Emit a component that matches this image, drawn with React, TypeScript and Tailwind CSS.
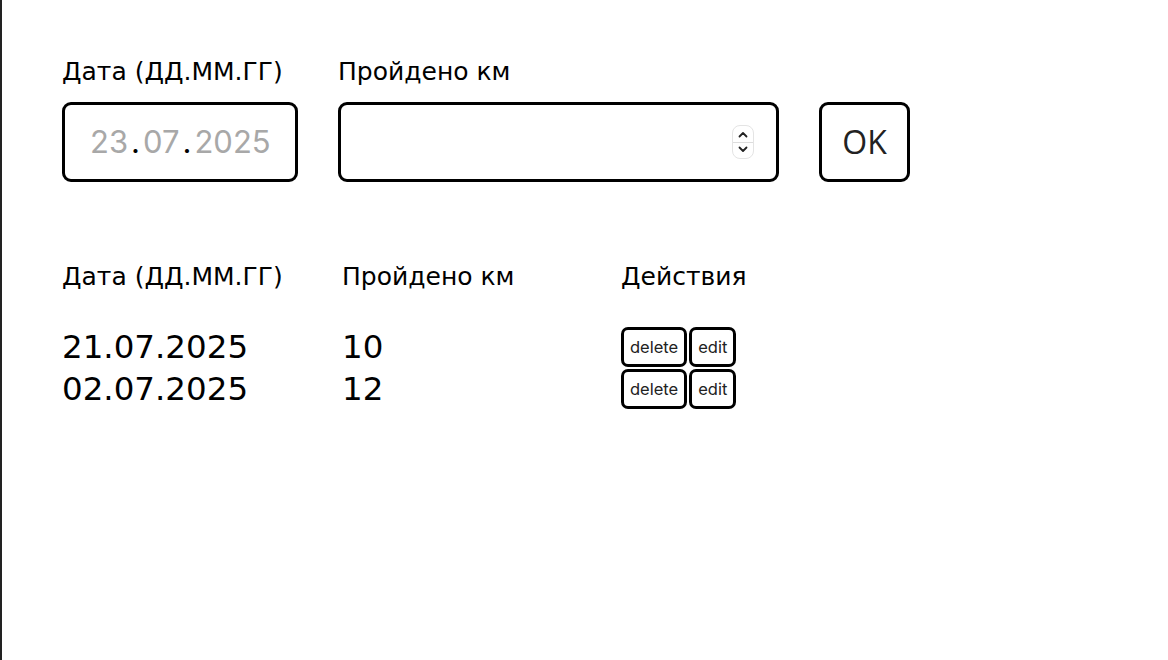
import { useState } from "react";

const rows = [
  { date: "21.07.2025", km: 10 },
  { date: "02.07.2025", km: 12 },
];

export default function App() {
  const [km, setKm] = useState("");

  return (
    <div className="min-h-[660px] w-full border-l-2 border-[#222] bg-white text-black [font-family:'DejaVu_Sans',Verdana,sans-serif]">
      <div className="pl-[60px] pt-[57px]">
        {/* форма */}
        <div className="flex items-end gap-[40px]">
          <div className="flex flex-col gap-[15px]">
            <label className="text-[25px] leading-[30px]">Дата (ДД.ММ.ГГ)</label>
            <div className="flex h-[80px] w-[236px] items-center rounded-[9px] border-[3px] border-black pl-[25px] text-[31px] text-[#a8a8a8] [font-family:Inter,'Liberation_Sans',sans-serif]">
              <span>23</span>
              <span className="mx-[3px] text-black">.</span>
              <span>07</span>
              <span className="mx-[3px] text-black">.</span>
              <span>2025</span>
            </div>
          </div>
          <div className="flex flex-col gap-[15px]">
            <label className="text-[25px] leading-[30px]">Пройдено км</label>
            <div className="flex h-[80px] w-[441px] items-center justify-end rounded-[9px] border-[3px] border-black pr-[22px]">
              <input
                value={km}
                onChange={(e) => setKm(e.target.value)}
                className="h-full min-w-0 flex-1 bg-transparent pl-4 text-[30px] outline-none"
              />
              <div className="flex h-[34px] w-[22px] flex-col items-center justify-center rounded-[8px] border border-[#e4e4e4] bg-white">
                <svg width="12" height="13" viewBox="0 0 12 12" className="mb-[1px]">
                  <path d="M2.5 8 L6 4.5 L9.5 8" fill="none" stroke="#222" strokeWidth="1.8" strokeLinecap="round" strokeLinejoin="round" />
                </svg>
                <div className="h-px w-full bg-[#ddd]" />
                <svg width="12" height="13" viewBox="0 0 12 12">
                  <path d="M2.5 4 L6 7.5 L9.5 4" fill="none" stroke="#222" strokeWidth="1.8" strokeLinecap="round" strokeLinejoin="round" />
                </svg>
              </div>
            </div>
          </div>
          <button className="h-[80px] w-[91px] rounded-[9px] border-[3px] border-black text-[32px] text-[#222] [font-family:'Open_Sans',sans-serif]">
            OK
          </button>
        </div>

        {/* таблица */}
        <div className="mt-[80px] grid grid-cols-[280px_279px_auto] items-center">
          <div className="text-[25px] leading-[30px]">Дата (ДД.ММ.ГГ)</div>
          <div className="text-[25px] leading-[30px]">Пройдено км</div>
          <div className="text-[25px] leading-[30px]">Действия</div>
          <div className="col-span-3 h-[34px]" />
          {rows.map((r) => (
            <div key={r.date} className="contents">
              <div className="text-[32.5px] leading-[42px]">{r.date}</div>
              <div className="text-[32.5px] leading-[42px]">{r.km}</div>
              <div className="flex gap-[2px] [font-family:Inter,'Liberation_Sans',sans-serif]">
                <button className="h-[40px] rounded-[7px] border-[3px] border-black px-[6px] text-[16.5px] text-[#222]">
                  delete
                </button>
                <button className="h-[40px] rounded-[7px] border-[3px] border-black px-[6px] text-[16.5px] text-[#222]">
                  edit
                </button>
              </div>
            </div>
          ))}
        </div>
      </div>
    </div>
  );
}
